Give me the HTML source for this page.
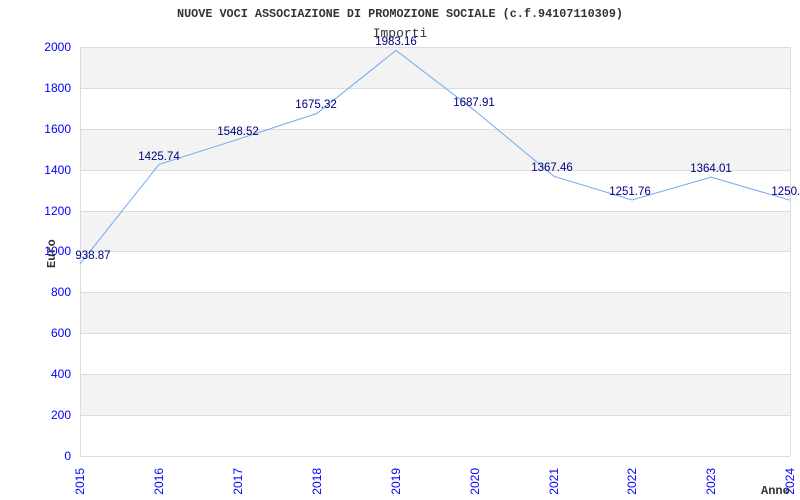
<!DOCTYPE html>
<html><head><meta charset="utf-8"><style>html,body{margin:0;padding:0;background:#fff;}svg{display:block}</style></head>
<body>
<svg width="800" height="500" xmlns="http://www.w3.org/2000/svg">
<rect width="800" height="500" fill="#fff"/>
<g fill="#f3f3f3">
<rect x="80" y="47" width="710" height="41"/>
<rect x="80" y="129" width="710" height="41"/>
<rect x="80" y="211" width="710" height="40"/>
<rect x="80" y="292" width="710" height="41"/>
<rect x="80" y="374" width="710" height="41"/>
</g>
<g stroke="#dcdcdc" stroke-width="1">
<line x1="80" y1="47.5" x2="790" y2="47.5"/>
<line x1="80" y1="88.5" x2="790" y2="88.5"/>
<line x1="80" y1="129.5" x2="790" y2="129.5"/>
<line x1="80" y1="170.5" x2="790" y2="170.5"/>
<line x1="80" y1="211.5" x2="790" y2="211.5"/>
<line x1="80" y1="251.5" x2="790" y2="251.5"/>
<line x1="80" y1="292.5" x2="790" y2="292.5"/>
<line x1="80" y1="333.5" x2="790" y2="333.5"/>
<line x1="80" y1="374.5" x2="790" y2="374.5"/>
<line x1="80" y1="415.5" x2="790" y2="415.5"/>
<line x1="80" y1="456.5" x2="790" y2="456.5"/>
<line x1="80.5" y1="47" x2="80.5" y2="456"/>
<line x1="790.5" y1="47" x2="790.5" y2="456"/>
</g>
<polyline fill="none" stroke="#6eaaf0" stroke-width="1" points="80,264 159,164.4 238,139.3 317,113.4 396,50.4 475,110.8 554,176.3 632,200 711,177.1 790,200.2"/>
<g font-family="Liberation Sans, sans-serif" font-size="11.5" fill="#000080" text-anchor="middle">
<text x="93" y="259">938.87</text>
<text x="159" y="160">1425.74</text>
<text x="238" y="135">1548.52</text>
<text x="316" y="108">1675.32</text>
<text x="396" y="45">1983.16</text>
<text x="474" y="106">1687.91</text>
<text x="552" y="171">1367.46</text>
<text x="630" y="195">1251.76</text>
<text x="711" y="172">1364.01</text>
<text x="789" y="195">1250.9</text>
</g>
<g font-family="Liberation Sans, sans-serif" font-size="12" fill="#0000ff" text-anchor="end">
<text x="71" y="51">2000</text>
<text x="71" y="92">1800</text>
<text x="71" y="133">1600</text>
<text x="71" y="174">1400</text>
<text x="71" y="215">1200</text>
<text x="71" y="255">1000</text>
<text x="71" y="296">800</text>
<text x="71" y="337">600</text>
<text x="71" y="378">400</text>
<text x="71" y="419">200</text>
<text x="71" y="460">0</text>
</g>
<g font-family="Liberation Sans, sans-serif" font-size="12" fill="#0000ff" text-anchor="end">
<text transform="translate(84,468) rotate(-90)">2015</text>
<text transform="translate(163,468) rotate(-90)">2016</text>
<text transform="translate(242,468) rotate(-90)">2017</text>
<text transform="translate(321,468) rotate(-90)">2018</text>
<text transform="translate(400,468) rotate(-90)">2019</text>
<text transform="translate(479,468) rotate(-90)">2020</text>
<text transform="translate(558,468) rotate(-90)">2021</text>
<text transform="translate(636,468) rotate(-90)">2022</text>
<text transform="translate(715,468) rotate(-90)">2023</text>
<text transform="translate(794,468) rotate(-90)">2024</text>
</g>
<text x="400" y="17" text-anchor="middle" font-family="Liberation Mono, monospace" font-size="11.8" font-weight="bold" fill="#333">NUOVE VOCI ASSOCIAZIONE DI PROMOZIONE SOCIALE (c.f.94107110309)</text>
<text x="400" y="37" text-anchor="middle" font-family="Liberation Mono, monospace" font-size="13" fill="#333">Importi</text>
<text transform="translate(55,268) rotate(-90)" font-family="Liberation Mono, monospace" font-size="12" font-weight="bold" fill="#333">Euro</text>
<text x="761" y="494" font-family="Liberation Mono, monospace" font-size="12" font-weight="bold" fill="#333">Anno</text>
</svg>
</body></html>
